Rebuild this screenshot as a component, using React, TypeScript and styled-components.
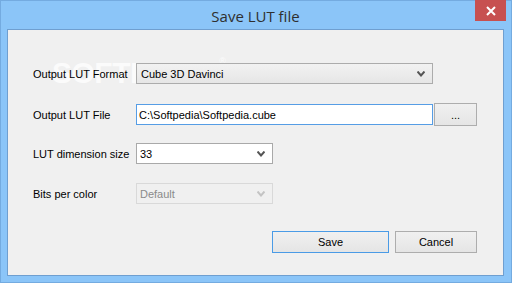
import React from 'react';
import styled, { createGlobalStyle } from 'styled-components';

const GlobalStyle = createGlobalStyle`
  html, body { margin: 0; padding: 0; background: #8bc5f8; }
  * { box-sizing: border-box; }
`;

const Window = styled.div`
  width: 512px;
  height: 283px;
  background: #8bc5f8;
  border: 1px solid #74abe0;
  padding: 0 7px 6px 6px;
  display: flex;
  flex-direction: column;
  font-family: "Liberation Sans", Arial, sans-serif;
`;

const TitleBar = styled.div`
  height: 28px;
  position: relative;
  display: flex;
  align-items: center;
  justify-content: center;
`;

const Title = styled.div`
  font-family: "Open Sans", "Noto Sans", sans-serif;
  font-size: 15px;
  color: #2f2f2f;
  margin-top: 1px;
`;

const CloseButton = styled.div`
  position: absolute;
  top: -1px;
  right: -2px;
  width: 31px;
  height: 21px;
  background: #c75050;
  display: flex;
  align-items: center;
  justify-content: center;
`;

const Client = styled.div`
  flex: 1;
  position: relative;
  background: #f0f0f0;
  border: 1px solid #6f9fd0;
  padding: 33px 26px 0 25px;
  display: flex;
  flex-direction: column;
`;

const Watermark = styled.div`
  position: absolute;
  left: 44px;
  top: 26px;
  font-size: 30px;
  font-weight: bold;
  letter-spacing: -0.5px;
  color: rgba(255, 255, 255, 0.75);
  pointer-events: none;
  sup { font-size: 9px; font-weight: normal; vertical-align: top; }
`;

const Row = styled.div`
  display: grid;
  grid-template-columns: 103px auto;
  align-items: center;
  height: 21px;
  margin-bottom: 19px;
  position: relative;
`;

const Label = styled.div`
  font-size: 11px;
  color: #000;
`;

const Field = styled.div`
  display: flex;
  align-items: center;
  gap: 1px;
`;

const Combo = styled.div<{ $width: number; $variant: 'button' | 'edit' | 'disabled' }>`
  width: ${p => p.$width}px;
  height: 21px;
  display: flex;
  align-items: center;
  justify-content: space-between;
  padding: 0 7px 0 ${p => (p.$variant === 'button' ? 4 : 3)}px;
  font-size: 11px;
  border: 1px solid ${p => (p.$variant === 'disabled' ? '#d9d9d9' : p.$variant === 'edit' ? '#a9a9a9' : '#acacac')};
  background: ${p =>
    p.$variant === 'button' ? 'linear-gradient(#f2f2f2, #e6e6e6)' : p.$variant === 'edit' ? '#fff' : '#f0f0f0'};
  color: ${p => (p.$variant === 'disabled' ? '#8a8a8a' : '#000')};
`;

const TextInput = styled.div`
  width: 297px;
  height: 21px;
  border: 1px solid #569de5;
  background: #fff;
  display: flex;
  align-items: center;
  padding-left: 2px;
  font-size: 11px;
  color: #000;
`;

const PushButton = styled.div<{ $width: number; $default?: boolean }>`
  width: ${p => p.$width}px;
  height: ${p => (p.$default !== undefined ? 22 : 23)}px;
  border: 1px solid ${p => (p.$default ? '#4a9be6' : '#adadad')};
  background: linear-gradient(#f0f0f0, #e5e5e5);
  display: flex;
  align-items: center;
  justify-content: center;
  font-size: 11px;
  color: #000;
`;

const ButtonBar = styled.div`
  display: flex;
  justify-content: flex-end;
  gap: 6px;
  margin-top: 8px;
`;

const Chevron = ({ color }: { color: string }) => (
  <svg width="8" height="6" viewBox="0 0 8 6">
    <path d="M0.5 0.5 L4 4.5 L7.5 0.5" fill="none" stroke={color} strokeWidth="2" />
  </svg>
);

const App = () => (
  <>
    <GlobalStyle />
    <Window>
      <TitleBar>
        <Title>Save LUT file</Title>
        <CloseButton>
          <svg width="10" height="10" viewBox="0 0 10 10">
            <path d="M1 1 L9 9 M9 1 L1 9" stroke="#fff" strokeWidth="2" />
          </svg>
        </CloseButton>
      </TitleBar>
      <Client>
        <Watermark>
          SOFTPEDIA<sup>®</sup>
        </Watermark>
        <Row>
          <Label>Output LUT Format</Label>
          <Field>
            <Combo $width={297} $variant="button">
              Cube 3D Davinci
              <Chevron color="#555" />
            </Combo>
          </Field>
        </Row>
        <Row>
          <Label>Output LUT File</Label>
          <Field>
            <TextInput>C:\Softpedia\Softpedia.cube</TextInput>
            <PushButton $width={43}>...</PushButton>
          </Field>
        </Row>
        <Row>
          <Label>LUT dimension size</Label>
          <Field>
            <Combo $width={137} $variant="edit">
              33
              <Chevron color="#555" />
            </Combo>
          </Field>
        </Row>
        <Row>
          <Label>Bits per color</Label>
          <Field>
            <Combo $width={137} $variant="disabled">
              Default
              <Chevron color="#c4c4c4" />
            </Combo>
          </Field>
        </Row>
        <ButtonBar>
          <PushButton $width={117} $default>Save</PushButton>
          <PushButton $width={82} $default={false}>Cancel</PushButton>
        </ButtonBar>
      </Client>
    </Window>
  </>
);

export default App;
